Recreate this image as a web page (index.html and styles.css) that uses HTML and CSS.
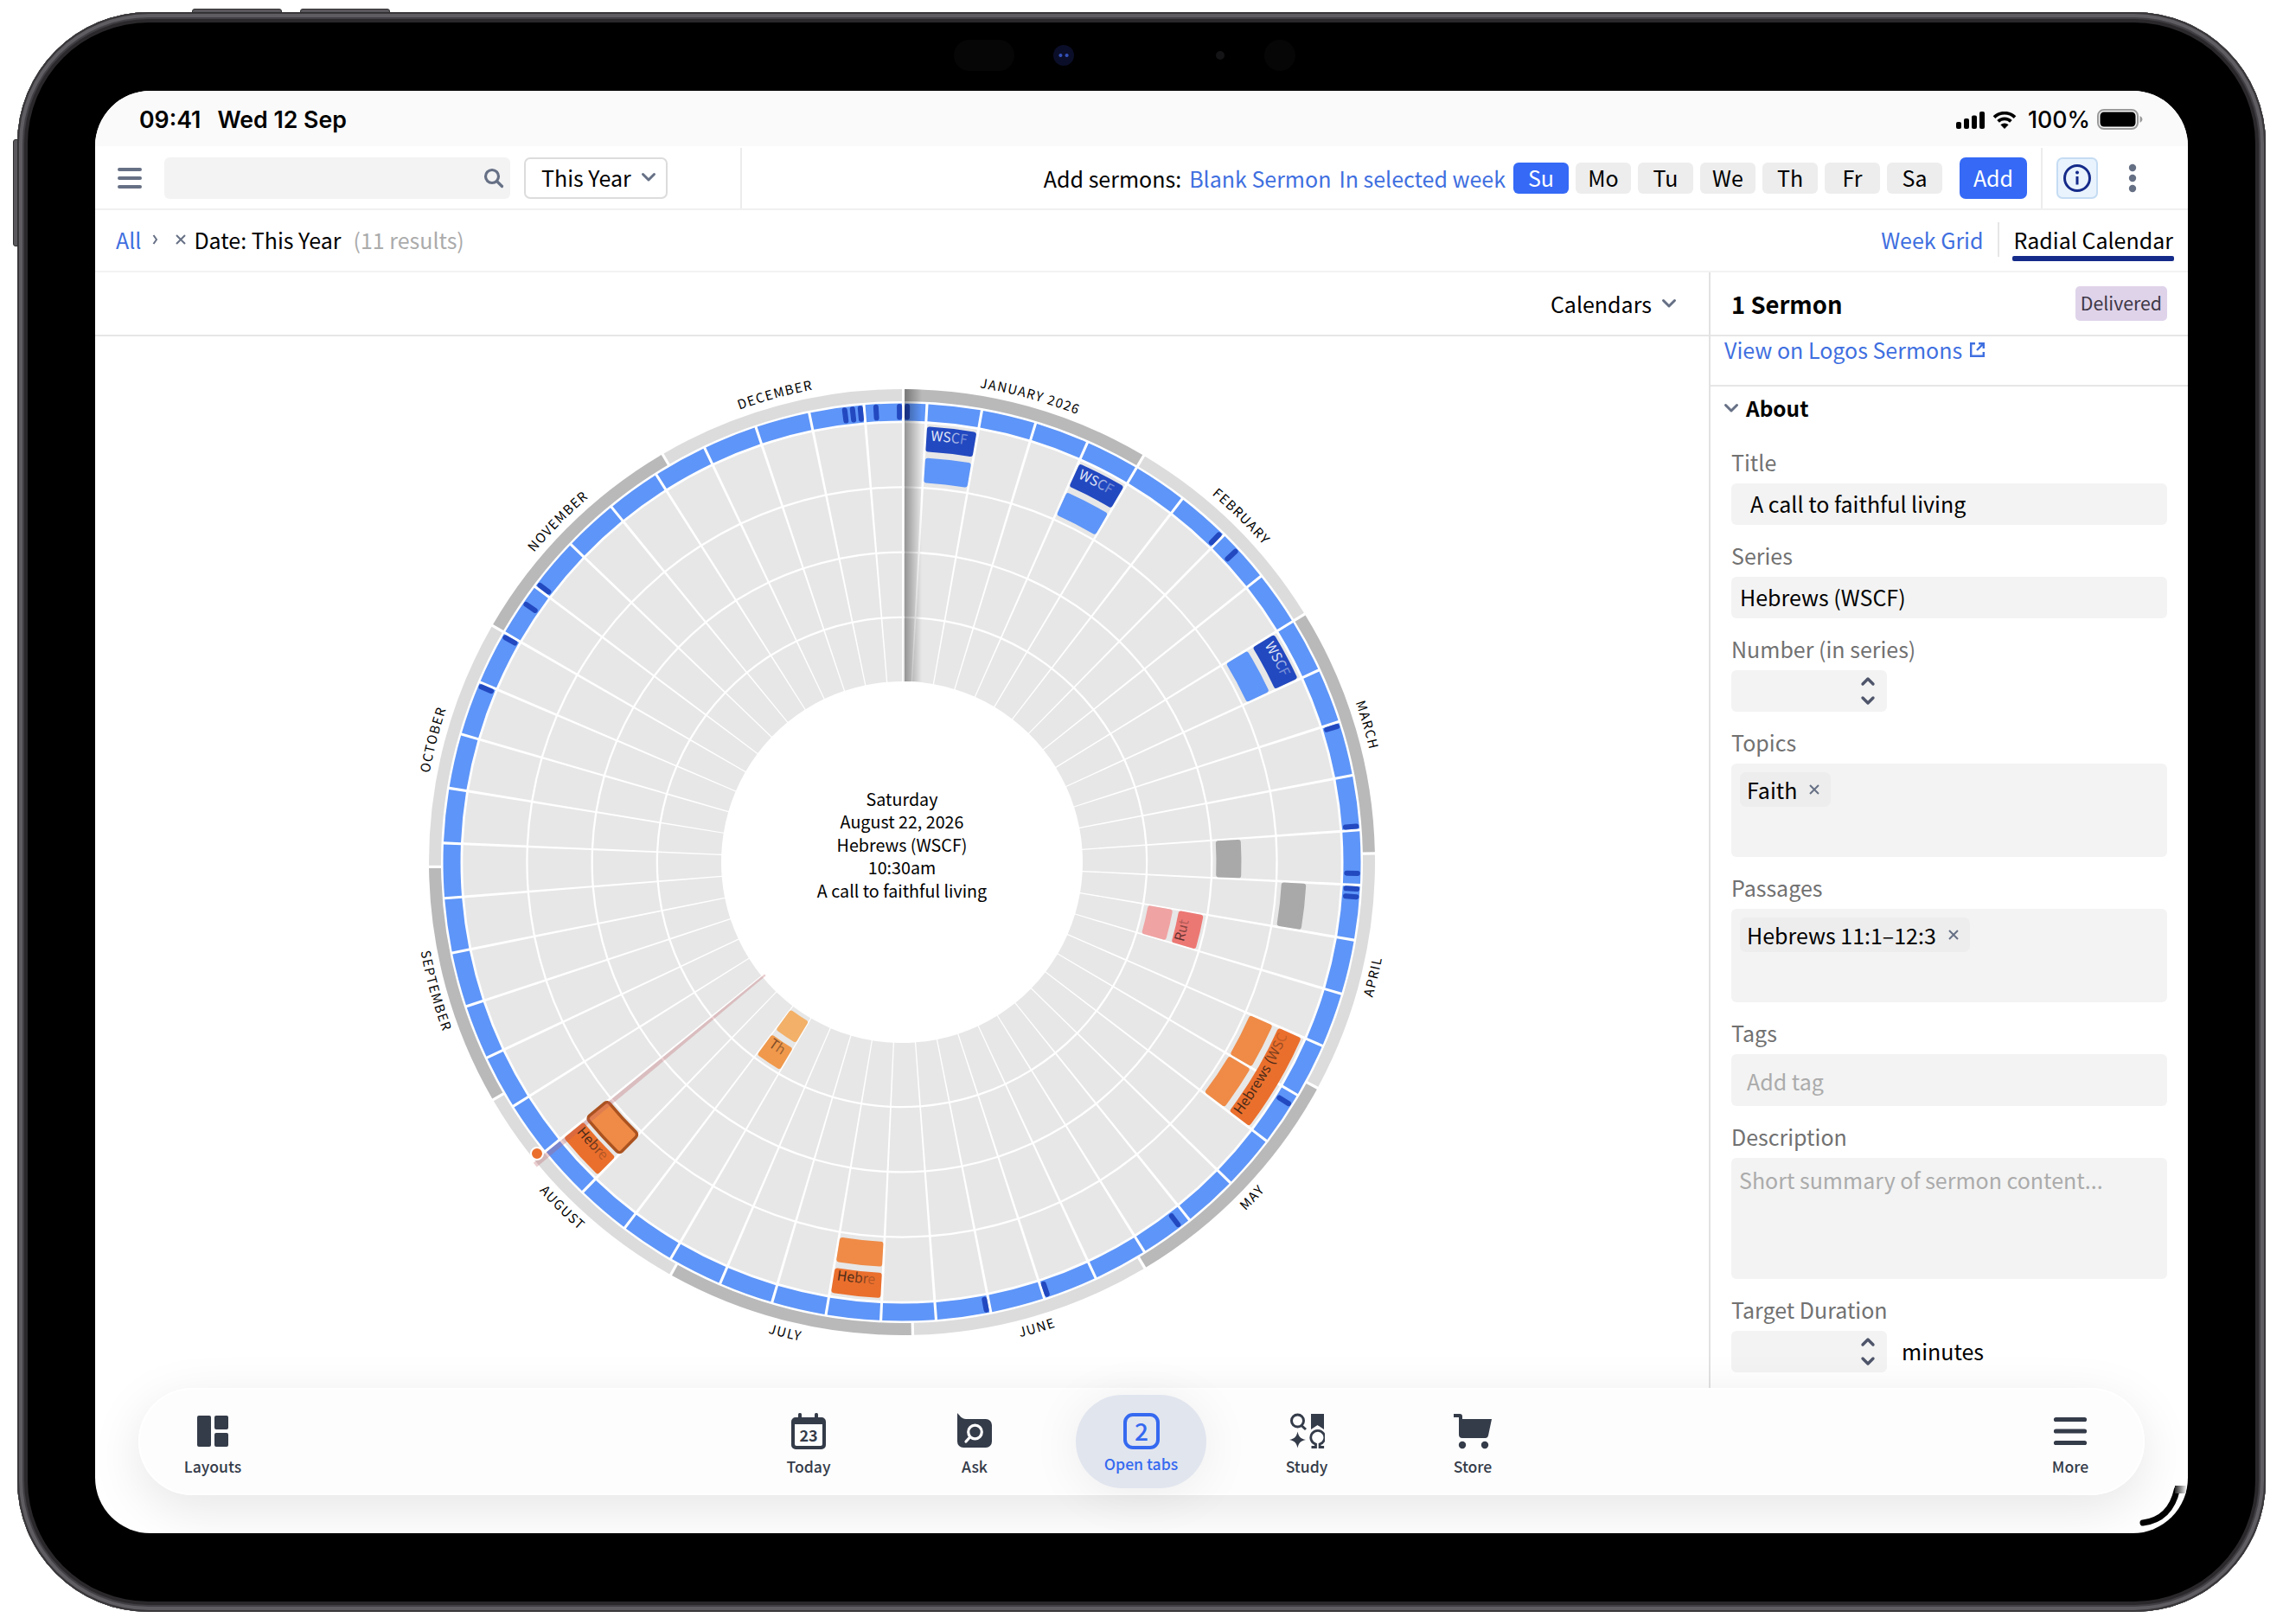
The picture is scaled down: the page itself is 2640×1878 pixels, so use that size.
FILE: index.html
```html
<!DOCTYPE html>
<html lang="en">
<head>
<meta charset="utf-8">
<title>Sermon Manager</title>
<link rel="stylesheet" href="styles.css">
</head>
<body>
<div class="device">
  <span class="key key-top-a"></span>
  <span class="key key-top-b"></span>
  <span class="key key-side"></span>
  <div class="sensors"><i class="sensor-pill"></i><i class="sensor-lens"></i><i class="sensor-dot"></i><i class="sensor-round"></i></div>
  <div class="screen">
    <header class="status">
      <div class="status-left"><span>09:41</span><span>Wed 12 Sep</span></div>
      <div class="status-right">
        <svg class="i-signal" width="34" height="20" viewBox="0 0 34 20"><rect x="0" y="12" width="6" height="8" rx="2"/><rect x="9" y="8" width="6" height="12" rx="2"/><rect x="18" y="4.500" width="6" height="15.500" rx="2"/><rect x="27" y="0" width="6" height="20" rx="2"/></svg>
        <svg class="i-wifi" width="28" height="20" viewBox="0 0 28 20"><path d="M2 6.600a17.200 17.200 0 0 1 24 0M6.600 11.400a10.600 10.600 0 0 1 14.800 0" fill="none" stroke="#000" stroke-width="3.800"/><path d="M14 20l-4.600-4.700a6.500 6.500 0 0 1 9.200 0z"/></svg>
        <span>100%</span>
        <svg class="i-batt" width="54" height="24" viewBox="0 0 54 24"><rect x="1" y="1" width="46" height="22" rx="7" fill="none" stroke="#9a9a9a" stroke-width="2"/><rect x="3.500" y="3.500" width="41" height="17" rx="4.500"/><path d="M49.500 8v8q3-1.500 3-4t-3-4z" fill="#9a9a9a"/></svg>
      </div>
    </header>

    <div class="toolbar">
      <svg class="i-menu" width="28" height="26" viewBox="0 0 28 26"><path d="M2 3h24M2 13h24M2 23h24" stroke="#667085" stroke-width="4" stroke-linecap="round"/></svg>
      <div class="search"><svg width="24" height="24" viewBox="0 0 24 24" fill="none" stroke="#667085" stroke-width="3.200" stroke-linecap="round"><circle cx="10" cy="10" r="7.500"/><path d="M15.500 15.500l6 6"/></svg></div>
      <div class="dropdown"><span>This Year</span><svg width="18" height="12" viewBox="0 0 18 12"><path class="chev" d="M2.500 2.500L9 9l6.500-6.500"/></svg></div>
      <i class="vline"></i>
      <div class="adders">
        <span>Add sermons:</span><a>Blank Sermon</a><a>In selected week</a>
      </div>
      <div class="days"><b class="on">Su</b><b>Mo</b><b>Tu</b><b>We</b><b>Th</b><b>Fr</b><b>Sa</b></div>
      <div class="add">Add</div>
      <i class="vline"></i>
      <div class="info"><svg width="32" height="32" viewBox="0 0 32 32"><circle cx="16" cy="16" r="14.500" fill="none" stroke="#152b8a" stroke-width="3"/><circle cx="16" cy="9.500" r="2" fill="#152b8a"/><path d="M16 14v9.500" stroke="#152b8a" stroke-width="3"/></svg></div>
      <svg class="i-dots" width="10" height="34" viewBox="0 0 10 34" fill="#667085"><circle cx="5" cy="5" r="4.200"/><circle cx="5" cy="17" r="4.200"/><circle cx="5" cy="29" r="4.200"/></svg>
    </div>

    <div class="crumbs">
      <a class="all">All</a>
      <svg class="i-gt" width="8" height="12" viewBox="0 0 8 12"><path d="M1.500 1L5 6l-3.500 5" fill="none" stroke="#667085" stroke-width="2"/></svg>
      <svg class="i-x" width="12" height="12" viewBox="0 0 12 12"><path class="cross" d="M1 1l10 10M11 1L1 11"/></svg>
      <span>Date: This Year</span><span class="count">(11 results)</span>
      <div class="views"><a>Week Grid</a><i></i><span class="current">Radial Calendar</span></div>
    </div>

    <div class="body">
      <main class="main">
        <div class="subbar"><span>Calendars</span><svg width="18" height="12" viewBox="0 0 18 12"><path class="chev" d="M2.500 2.500L9 9l6.500-6.500"/></svg></div>
        <svg id="wheel" class="wheel" viewBox="-933 -608 1866 1216"></svg>
      </main>
      <aside class="panel">
        <div class="panel-head"><h2>1 Sermon</h2><span class="badge">Delivered</span></div>
        <div class="panel-link"><a>View on Logos Sermons</a><svg width="19" height="19" viewBox="0 0 19 19" fill="none" stroke="#3f6fe0" stroke-width="2.400"><path d="M7 2.200H2.200v14.600h14.600V12M11 2.200h5.800V8M16.500 2.500l-7.500 7.500"/></svg></div>
        <div class="about"><svg width="18" height="12" viewBox="0 0 18 12"><path class="chev" d="M2.500 2.500L9 9l6.500-6.500"/></svg><h3>About</h3></div>
        <div class="form">
          <label>Title</label><div class="input pad-l">A call to faithful living</div>
          <label>Series</label><div class="input">Hebrews (WSCF)</div>
          <label>Number (in series)</label><div class="input num"><svg width="18" height="36" viewBox="0 0 18 36"><path class="step" d="M3 10l6-6 6 6M3 26l6 6 6-6"/></svg></div>
          <label>Topics</label><div class="input chips"><span class="chip">Faith<svg width="12" height="12" viewBox="0 0 12 12"><path class="cross" d="M1 1l10 10M11 1L1 11"/></svg></span></div>
          <label>Passages</label><div class="input chips"><span class="chip">Hebrews 11:1–12:3<svg width="12" height="12" viewBox="0 0 12 12"><path class="cross" d="M1 1l10 10M11 1L1 11"/></svg></span></div>
          <label>Tags</label><div class="input tags">Add tag</div>
          <label>Description</label><div class="input desc">Short summary of sermon content...</div>
          <label>Target Duration</label>
          <div class="row"><div class="input num"><svg width="18" height="36" viewBox="0 0 18 36"><path class="step" d="M3 10l6-6 6 6M3 26l6 6 6-6"/></svg></div><span>minutes</span></div>
        </div>
      </aside>
    </div>

    <nav class="tabs">
      <div class="tab end"><svg width="42" height="42" viewBox="0 0 42 42"><rect x="3" y="3" width="16" height="36" rx="2"/><rect x="23" y="3" width="16" height="16" rx="2"/><rect x="23" y="23" width="16" height="16" rx="2"/></svg><span>Layouts</span></div>
      <div class="group">
        <div class="tab"><svg width="42" height="42" viewBox="0 0 42 42"><rect x="9" y="0" width="4" height="10" rx="1.500"/><rect x="28" y="0" width="4" height="10" rx="1.500"/><path fill-rule="evenodd" d="M6 5h30a5 5 0 0 1 5 5v27a5 5 0 0 1-5 5H6a5 5 0 0 1-5-5V10a5 5 0 0 1 5-5zm-1 8v23a2 2 0 0 0 2 2h28a2 2 0 0 0 2-2V13z"/><text x="21" y="33" text-anchor="middle" class="t23">23</text></svg><span>Today</span></div>
        <div class="tab"><svg width="42" height="42" viewBox="0 0 42 42"><path d="M1 0C4 3 6 7 11 7H34a7 7 0 0 1 7 7V33a7 7 0 0 1-7 7H8a7 7 0 0 1-7-7z"/><g fill="none" stroke="#fff" stroke-width="3.200" stroke-linecap="round"><circle cx="21.500" cy="22" r="7.800"/><path d="M15.500 28L11 33"/></g></svg><span>Ask</span></div>
        <div class="tab active"><svg width="42" height="42" viewBox="0 0 42 42"><rect x="2" y="2" width="38" height="38" rx="9" fill="none" stroke="#3569f0" stroke-width="4"/><text x="21" y="31.500" text-anchor="middle" class="t2">2</text></svg><span>Open tabs</span></div>
        <div class="tab"><svg width="42" height="42" viewBox="0 0 42 42"><g fill="none" stroke="#343b49" stroke-width="3"><circle cx="10.500" cy="9" r="7"/><path d="M15 14.500l5 4.500"/><path d="M26.500 39.500h5v-3.500a8 8 0 1 1 4.600 0v3.500h5" stroke-width="2.800"/></g><path d="M26 1h15v18l-7.500-5L26 19z"/><path d="M10.500 21.500c1.200 6 3.400 8.200 9.500 9.500-6.100 1.300-8.300 3.500-9.500 9.500-1.200-6-3.400-8.200-9.500-9.500 6.100-1.300 8.300-3.500 9.500-9.500z"/></svg><span>Study</span></div>
        <div class="tab"><svg width="46" height="42" viewBox="0 0 46 42"><path d="M1 1h7q3 0 3 3v3h34L41 26q-.6 3-3.500 3H11q-4 0-4-4V5H1z"/><circle cx="11" cy="37" r="4.200"/><circle cx="37" cy="37" r="4.200"/></svg><span>Store</span></div>
      </div>
      <div class="tab end"><svg width="42" height="42" viewBox="0 0 42 42"><path d="M4.500 7.500h33M4.500 21h33M4.500 34.500h33" stroke="#343b49" stroke-width="5.200" stroke-linecap="round"/></svg><span>More</span></div>
    </nav>
    <svg class="corner" width="60" height="50" viewBox="0 0 60 50"><defs><linearGradient id="cg"><stop offset="0" stop-color="#222"/><stop offset="1" stop-color="#eee"/></linearGradient></defs><path d="M8 43Q40 39 47.500 4" fill="none" stroke="#000" stroke-width="7" stroke-linecap="round"/><rect x="45" y="0" width="13" height="9" fill="url(#cg)"/></svg>
  </div>
</div>
<script src="wheel.js"></script>
</body>
</html>
```
FILE: styles.css
```css
* { box-sizing: border-box; }
body {
  margin: 0;
  background: #fff;
  font-family: "Noto Sans CJK SC", "Noto Sans", sans-serif;
  font-size: 25px;
  line-height: 36px;
  color: #000;
}
svg { display: block; flex: none; }
a { color: #3f6fe0; }
h2, h3 { margin: 0; font-size: inherit; font-weight: 700; }
i { display: block; }

/* tablet shell */
.device {
  position: relative;
  width: 2600px;
  height: 1850px;
  margin: 14px 0 0 20px;
  padding: 91px 90px 0;
  border-radius: 152px;
  background: #000;
  box-shadow: inset 0 0 0 2px #39373a, inset 0 0 0 6px #5f5d61, inset 0 0 0 8px #413f43, inset 0 0 0 12px #2a282b;
}
.key { position: absolute; background: #5a585c; border: 1px solid #2f2e30; }
.key-top-a, .key-top-b { top: -4px; width: 104px; height: 5px; border-radius: 3px 3px 0 0; }
.key-top-a { left: 202px; }
.key-top-b { left: 327px; }
.key-side { left: -5px; top: 147px; width: 6px; height: 124px; border-radius: 3px 0 0 3px; }
.sensors { position: absolute; left: 1083px; top: 32px; height: 36px; display: flex; align-items: center; }
.sensor-pill { width: 70px; height: 36px; border-radius: 18px; background: #060607; }
.sensor-lens { width: 24px; height: 24px; margin: 0 1px 0 45px; border-radius: 50%; background: radial-gradient(circle at 35% 50%, #3350b8 0 1.5px, transparent 2.5px), radial-gradient(circle at 65% 50%, #3350b8 0 1.5px, transparent 2.5px), #0b0e28; }
.sensor-dot { width: 10px; height: 10px; margin-left: 163px; border-radius: 50%; background: #141416; }
.sensor-round { width: 36px; height: 36px; margin-left: 46px; border-radius: 50%; background: #060607; }

.screen {
  position: relative;
  width: 2420px;
  height: 1668px;
  border-radius: 64px;
  background: #fff;
  overflow: hidden;
}

/* status bar */
.status {
  height: 64px;
  padding: 2px 51px 0 51px;
  background: #fafafa;
  display: flex;
  justify-content: space-between;
  align-items: center;
  font: 600 26.7px/62px Inter, sans-serif;
}
.status-left { display: flex; gap: 19px; }
.status-right { display: flex; align-items: center; font-weight: 500; }
.i-signal { margin-top: 2px; }
.i-wifi { margin: 2px 13px 0 8px; }
.i-batt { margin-left: 8px; }

/* toolbar */
.toolbar {
  height: 74px;
  border-bottom: 2px solid #f0f0f0;
  display: flex;
  align-items: center;
  padding: 2px 0 0 26px;
}
.search {
  width: 400px; height: 48px;
  margin-left: 26px;
  padding-right: 7px;
  border-radius: 6px;
  background: #f3f3f3;
  display: flex; align-items: center; justify-content: flex-end;
}
.dropdown {
  width: 166px; height: 48px;
  margin: 0 84px 0 16px;
  padding: 0 11px 2px 18px;
  border: 2px solid #dcdcdc;
  border-radius: 7px;
  display: flex; align-items: center; justify-content: space-between;
}
.chev { fill: none; stroke: #667085; stroke-width: 3; stroke-linecap: round; stroke-linejoin: round; }
.step { fill: none; stroke: #4f566b; stroke-width: 3.4; stroke-linecap: round; stroke-linejoin: round; }
.cross { fill: none; stroke: #667085; stroke-width: 2; }
.vline { width: 2px; height: 70px; background: #ececec; }
.adders { margin-left: auto; display: flex; gap: 9px; padding-bottom: 1px; white-space: nowrap; }
.days { display: flex; gap: 8px; margin-left: 9px; }
.days b {
  width: 64px; height: 36px;
  border-radius: 6px;
  background: #ededed;
  text-align: center;
  font-weight: 400;
  line-height: 35px;
}
.days .on { background: #3569f6; color: #fff; }
.add {
  width: 78px; height: 48px;
  margin: 0 16px 0 20px;
  border-radius: 7px;
  background: #3569f6;
  color: #fff;
  text-align: center;
  line-height: 47px;
}
.info {
  width: 48px; height: 48px;
  margin: 0 35px 0 16px;
  border: 2px solid #c5dcf3;
  border-radius: 7px;
  background: #e9f3fd;
  display: flex; align-items: center; justify-content: center;
}
.i-dots { margin-right: 59px; }

/* breadcrumb row */
.crumbs {
  height: 72px;
  border-bottom: 2px solid #f3f3f3;
  padding: 0 17px 2px 24px;
  display: flex;
  align-items: center;
}
.i-gt { margin: 0 19px 0 13px; }
.i-x { margin-right: 9px; }
.count { margin-left: 14px; color: #ababab; }
.views { margin-left: auto; display: flex; align-items: center; }
.views i { width: 2px; height: 40px; margin: 0 16px 0 17px; background: #e6e6e6; }
.current { position: relative; }
.current::after {
  content: "";
  position: absolute;
  left: -1px; right: -1px; bottom: -7px;
  height: 6px;
  border-radius: 2px;
  background: #152b8a;
}

/* body */
.body { display: flex; height: 1290px; }
.main { width: 1866px; }
.subbar {
  height: 74px;
  border-bottom: 2px solid #e6e6e6;
  padding: 0 37px 1px 0;
  display: flex; align-items: center; justify-content: flex-end;
  gap: 11px;
}
.wheel { width: 1866px; height: 1216px; }
.panel { width: 554px; border-left: 2px solid #e2e2e2; }
.panel-head {
  height: 74px;
  border-bottom: 2px solid #e6e6e6;
  padding: 0 24px 1px;
  display: flex; align-items: center; justify-content: space-between;
}
.panel-head h2 { font-size: 27.4px; }
.badge {
  height: 40px;
  padding: 0 6px;
  border-radius: 5px;
  background: #dfd3ea;
  color: #3d3846;
  font-size: 21.3px;
  line-height: 38px;
}
.panel-link {
  height: 58px;
  border-bottom: 2px solid #e6e6e6;
  padding: 0 0 26px 16px;
  display: flex; align-items: center;
  gap: 8px;
}
.about { height: 52px; padding: 0 0 2px 15px; display: flex; align-items: center; gap: 8px; font-size: 24.4px; }
.form { padding: 0 24px; }
.form label { display: block; height: 60px; padding-top: 17px; color: #717171; }
.input {
  height: 48px;
  padding: 0 10px;
  border-radius: 6px;
  background: #f3f3f3;
  line-height: 46px;
}
.pad-l { padding-left: 22px; }
.num { width: 180px; padding: 6px 13px 0 0; display: flex; justify-content: flex-end; }
.chips { height: 108px; padding: 10px; display: flex; align-items: flex-start; }
.chip {
  display: flex; align-items: center;
  height: 40px;
  padding: 0 13px 0 8px;
  border-radius: 7px;
  background: #ededed;
  line-height: 38px;
  gap: 14px;
}
.tags { height: 60px; padding-left: 18px; line-height: 62px; color: #ababab; }
.desc { height: 140px; padding: 7px 9px; line-height: 36px; color: #ababab; }
.row { display: flex; gap: 17px; line-height: 46px; }

/* bottom tabs */
.tabs {
  position: relative;
  height: 124px;
  margin: 0 50px;
  border-radius: 62px;
  background: #fdfdfd;
  box-shadow: 0 16px 60px rgba(0, 0, 0, .1), inset 0 0 0 2px #fff;
  display: flex;
  justify-content: space-between;
  color: #343b49;
  fill: #343b49;
}
.group { display: flex; margin-left: -2px; }
.tab {
  width: 192px; height: 124px;
  padding-top: 29px;
  display: flex; flex-direction: column; align-items: center;
  gap: 5px;
  font-size: 17.6px;
  font-weight: 500;
  line-height: 30px;
}
.tab.end { width: 172px; }
.tab.active {
  width: 151px; height: 108px;
  margin: 8px 20px 0 21px;
  padding-top: 21px;
  gap: 2px;
  border-radius: 54px;
  background: #e1e5ee;
  box-shadow: 0 6px 60px rgba(0, 0, 0, .07);
  color: #3569f0;
  fill: #3569f0;
}
.t23 { font-size: 18px; font-weight: 700; }
.t2 { font-size: 28px; font-weight: 500; }
.corner { position: absolute; left: 2360px; top: 1613px; }

/* wheel */
.month { font-size: 15px; letter-spacing: 1.35px; text-anchor: middle; }
.centre { font-size: 19.7px; text-anchor: middle; }
.cap { font-size: 15.8px; }
```
FILE: wheel.js
```js
(function () {
  var NS = 'http://www.w3.org/2000/svg';
  var svg = document.getElementById('wheel');
  var DAY = 360 / 365, GAP = 0.34;
  var uid = 0;

  function el(name, attrs, parent) {
    var e = document.createElementNS(NS, name);
    for (var k in attrs) e.setAttribute(k, attrs[k]);
    (parent || svg).appendChild(e);
    return e;
  }
  function pt(r, a) {
    var t = a * Math.PI / 180;
    return (r * Math.sin(t)).toFixed(2) + ' ' + (-r * Math.cos(t)).toFixed(2);
  }
  function sector(r0, r1, a0, a1) {
    var big = a1 - a0 > 180 ? 1 : 0;
    return 'M' + pt(r1, a0) + 'A' + r1 + ' ' + r1 + ' 0 ' + big + ' 1 ' + pt(r1, a1) +
      'L' + pt(r0, a1) + 'A' + r0 + ' ' + r0 + ' 0 ' + big + ' 0 ' + pt(r0, a0) + 'Z';
  }
  function cell(r0, r1, d0, d1, fill) {
    el('path', { d: sector(r0, r1, d0 * DAY + GAP, d1 * DAY), fill: fill });
  }
  // sector with softened corners
  function block(r0, r1, d0, d1, fill, edge) {
    var deg = 3 / ((r0 + r1) / 2) * 180 / Math.PI;
    var d = sector(r0 + 3, r1 - 3, d0 * DAY + GAP + deg, d1 * DAY - deg);
    if (edge) el('path', { d: d, fill: edge, stroke: edge, 'stroke-width': 12, 'stroke-linejoin': 'round' });
    el('path', { d: d, fill: fill, stroke: fill, 'stroke-width': edge ? 5 : 6, 'stroke-linejoin': 'round' });
  }
  function arcText(r, a0, a1, flip, cls, anchor) {
    var id = 'arc' + (uid++);
    var d = flip ? 'M' + pt(r, a1) + 'A' + r + ' ' + r + ' 0 0 0 ' + pt(r, a0)
                 : 'M' + pt(r, a0) + 'A' + r + ' ' + r + ' 0 0 1 ' + pt(r, a1);
    el('path', { id: id, d: d, fill: 'none' });
    var t = el('text', { 'class': cls });
    return el('textPath', { href: '#' + id, startOffset: anchor || 0 }, t);
  }
  function caption(r0, d0, d1, text, fades, flip, fill) {
    var r = r0 + (flip ? 13.5 : 13), pad = (flip ? 4 : 5) / r * 180 / Math.PI;
    var tp = arcText(r, d0 * DAY + GAP + (flip ? -10 : pad), d1 * DAY + (flip ? -pad : 10), flip, 'cap');
    tp.setAttribute('fill', fill);
    text.split('').forEach(function (ch, i) {
      var o = fades[i - text.length + fades.length];
      el('tspan', { 'fill-opacity': o === undefined ? 1 : o }, tp).textContent = ch;
    });
  }

  // months
  var names = ['JANUARY 2026', 'FEBRUARY', 'MARCH', 'APRIL', 'MAY', 'JUNE', 'JULY', 'AUGUST', 'SEPTEMBER', 'OCTOBER', 'NOVEMBER', 'DECEMBER'];
  var lens = [31, 28, 31, 30, 31, 30, 31, 31, 30, 31, 30, 31];
  var day = 0;
  names.forEach(function (name, i) {
    var end = day + lens[i], flip = i > 2 && i < 9;
    cell(533, 547, day, end, i % 2 ? '#dcdcdc' : '#b9b9b9');
    arcText(flip ? 566 : 556, day * DAY + 0.1, end * DAY + 0.1, flip, 'month', '50%').textContent = name;
    day = end;
  });

  // weeks, starting on Sundays
  for (var s = -4; s < 365; s += 7) {
    var a = Math.max(s, 0), b = Math.min(s + 7, 365);
    cell(510.5, 530.5, a, b, '#5e95f8');
    [[209, 282], [284.3, 357.2], [359.5, 432.4], [434.7, 507.7]].forEach(function (r) {
      cell(r[0], r[1], a, b, '#e7e7e7');
    });
  }

  // holidays
  [0, 44, 47, 73, 86, 92, 94, 95, 123, 144, 163, 171, 296, 303, 308, 311, 357, 358, 359, 361, 364].forEach(function (d) {
    var m = d * DAY + 0.67;
    el('path', { d: 'M' + pt(514.5, m) + 'L' + pt(527, m), stroke: '#2349c0', 'stroke-width': 6, 'stroke-linecap': 'round' });
  });

  // sermons
  [3, 24, 59].forEach(function (d) {
    block(475.5, 504.5, d, d + 7, '#2349c0');
    block(439.5, 468.3, d, d + 7, '#5e95f8');
    caption(475.5, d, d + 7, 'WSCF', [0.9, 0.85, 0.6, 0.4], false, '#fff');
  });
  block(363.5, 392.5, 87, 94, '#a9a9a9');
  block(439.5, 468, 94, 101, '#a9a9a9');
  block(289, 318, 101, 108, '#f0a3a3');
  block(325, 354, 101, 108, '#ec7874');
  caption(325, 101, 108, 'Rut', [0.85, 0.6, 0.35], true, '#4a2523');
  block(439.5, 468.3, 115, 122, '#ef8b47');
  block(439.5, 468.3, 122, 129, '#ef8b47');
  block(475.5, 504.5, 115, 129, '#ea6f2d');
  caption(475.5, 115, 129, 'Hebrews (WSC', [0.7, 0.5, 0.25], true, '#4a2a18');
  block(475.5, 504.5, 185, 192, '#ea6f2d');
  block(439.5, 468.3, 185, 192, '#ef8b47');
  caption(475.5, 185, 192, 'Hebre', [0.8, 0.6, 0.35], true, '#4a2a18');
  block(213.5, 242.500, 213, 220, '#f3b068');
  block(249.5, 278.5, 213, 220, '#f0994c');
  caption(249.5, 213, 220, 'Th', [0.7, 0.5], true, '#4a2a18');
  block(475.5, 504.5, 227, 234, '#ea6f2d');
  caption(475.5, 227, 234, 'Hebre', [0.8, 0.6, 0.35], true, '#4a2a18');
  block(439.5, 468.3, 227, 234, '#ef8b47', '#ab5320');

  // selected day
  el('path', { d: sector(205, 550, 233 * DAY + GAP, 234 * DAY), fill: 'rgba(188,94,98,.3)' });
  var dot = pt(540, 231.4).split(' ');
  el('circle', { cx: dot[0], cy: dot[1], r: 7, fill: '#ea6f2d', stroke: '#fff', 'stroke-width': 2 });

  // year seam
  var g = el('linearGradient', { id: 'seam' }, el('defs', {}));
  el('stop', { offset: 0, 'stop-color': '#000', 'stop-opacity': 0.36 }, g);
  el('stop', { offset: 1, 'stop-color': '#000', 'stop-opacity': 0 }, g);
  el('rect', { x: 3, y: -547, width: 20, height: 338, fill: 'url(#seam)' });

  ['Saturday', 'August 22, 2026', 'Hebrews (WSCF)', '10:30am', 'A call to faithful living'].forEach(function (line, i) {
    el('text', { 'class': 'centre', x: 0, y: -65 + i * 26.4 }).textContent = line;
  });
})();
```
